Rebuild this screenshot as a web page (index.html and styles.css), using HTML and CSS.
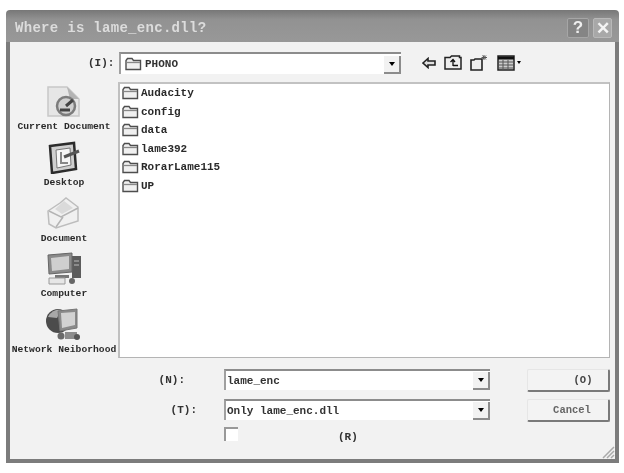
FILE: index.html
```html
<!DOCTYPE html>
<html lang="en">
<head>
<meta charset="utf-8">
<title>Where is lame_enc.dll?</title>
<link rel="stylesheet" href="styles.css">
</head>
<body>
<svg class="defs" width="0" height="0" aria-hidden="true">
  <symbol id="folder" viewBox="0 0 17 14">
    <path d="M1 12.5V3.5L2.5 1.5H7L8.5 3.5H15.5V12.5Z" fill="#f0f0f0" stroke="#4e4e4e" stroke-width="1.4"/>
    <path d="M1.5 5.5H15" stroke="#888" stroke-width="1.3"/>
  </symbol>
</svg>
<main class="win">
  <header class="title">
    <h1 class="title-text">Where is lame_enc.dll?</h1>
    <div class="caption">
      <span class="cap-btn cap-help">?</span>
      <span class="cap-btn cap-close">✕</span>
    </div>
  </header>
  <section class="client">
    <div class="toolbar">
      <span class="lbl lbl-look">(I):</span>
      <div class="combo combo-look">
        <svg class="ico-folder"><use href="#folder"/></svg>
        <span class="combo-text">PHONO</span>
        <span class="drop"><i class="tri"></i></span>
      </div>
      <div class="tools">
        <svg width="14" height="12" viewBox="0 0 14 12"><path d="M1 6L6 1.5V4H13V8H6V10.5Z" fill="#e0e0e0" stroke="#222" stroke-width="1.6"/></svg>
        <svg width="18" height="15" viewBox="0 0 18 15"><path d="M1 14V2.5H6L7.5 1H15.5V2.5H17V14Z" fill="#eee" stroke="#222" stroke-width="1.5"/><path d="M9 11V5M6.5 7L9 4.5L11 7M9 10.5H14" stroke="#111" stroke-width="1.3" fill="none"/></svg>
        <svg width="19" height="17" viewBox="0 0 19 17"><path d="M1 16V6H4L5 5H12V16Z" fill="#eee" stroke="#222" stroke-width="1.6"/><path d="M14 1V6M11.5 3.5H17M12.5 1.5L16 5.5M16 1.5L12.5 5.5" stroke="#555" stroke-width="1"/></svg>
        <span class="view">
          <svg width="18" height="16" viewBox="0 0 18 16"><rect x="1" y="1" width="16" height="14" fill="#ccc" stroke="#222" stroke-width="1.5"/><path d="M1 3H17" stroke="#111" stroke-width="3"/><path d="M2 7H16M2 10H16M2 13H16M6 5V15M11 5V15" stroke="#555" stroke-width="1"/></svg>
          <i class="tri tri-small"></i>
        </span>
      </div>
    </div>
    <div class="main">
      <nav class="places">
        <a class="place">
          <svg width="36" height="33" viewBox="0 0 36 33"><path d="M2 2H21L33 14V31H2Z" fill="#e6e6e6" stroke="#c8c8c8" stroke-width="1.5"/><path d="M21 2L24 14H33" fill="#b4b4b4"/><circle cx="20" cy="21" r="9" fill="#d0d0d0" stroke="#7c7c7c" stroke-width="2.5"/><path d="M20 21L27 15M14 25L24 25" stroke="#444" stroke-width="3"/></svg>
          <span>Current Document</span>
        </a>
        <a class="place">
          <svg width="36" height="33" viewBox="0 0 36 33"><path d="M4 5L28 2L30 28L6 32Z" fill="#cfcfcf" stroke="#2c2c2c" stroke-width="2.5"/><path d="M10 9L24 7L25 24L11 27Z" fill="#f6f6f6" stroke="#777"/><path d="M15 11V22H22" fill="none" stroke="#888" stroke-width="2"/><path d="M18 16L33 10" stroke="#555" stroke-width="3"/></svg>
          <span>Desktop</span>
        </a>
        <a class="place">
          <svg width="36" height="33" viewBox="0 0 36 33"><path d="M2 14L14 6L20 1L32 10L32 24L10 31L3 27Z" fill="#f0f0f0" stroke="#bdbdbd" stroke-width="1.5"/><path d="M3 14L15 20L32 11M10 30L17 20" fill="none" stroke="#b4b4b4" stroke-width="1.5"/><path d="M18 4L27 11L16 17L9 12Z" fill="#dadada"/></svg>
          <span>Document</span>
        </a>
        <a class="place">
          <svg width="38" height="33" viewBox="0 0 38 33"><rect x="27" y="4" width="9" height="22" fill="#5c5c5c"/><path d="M29 9H34M29 13H34" stroke="#bbb"/><path d="M3 3L27 1V20L4 22Z" fill="#8a8a8a" stroke="#666"/><path d="M6 6L24 4V17L7 19Z" fill="#cfcfcf"/><path d="M10 23H24V26H10Z" fill="#777"/><path d="M4 26H20V32H4Z" fill="#e6e6e6" stroke="#9a9a9a"/><circle cx="27" cy="29" r="3" fill="#666"/></svg>
          <span>Computer</span>
        </a>
        <a class="place">
          <svg width="38" height="33" viewBox="0 0 38 33"><circle cx="13" cy="13" r="12" fill="#4c4c4c"/><path d="M3 9A12 12 0 0 1 16 2L12 10Z" fill="#a8a8a8"/><path d="M13 3L32 1V20L15 23Z" fill="#8a8a8a" stroke="#777"/><path d="M16 5L30 4V17L17 20Z" fill="#d2d2d2"/><path d="M20 24H32V31H20Z" fill="#8c8c8c"/><circle cx="16" cy="28" r="3.5" fill="#6a6a6a"/><circle cx="32" cy="29" r="3" fill="#555"/></svg>
          <span>Network Neiborhood</span>
        </a>
      </nav>
      <ul class="files">
        <li class="file"><svg class="ico-folder"><use href="#folder"/></svg>Audacity</li>
        <li class="file"><svg class="ico-folder"><use href="#folder"/></svg>config</li>
        <li class="file"><svg class="ico-folder"><use href="#folder"/></svg>data</li>
        <li class="file"><svg class="ico-folder"><use href="#folder"/></svg>lame392</li>
        <li class="file"><svg class="ico-folder"><use href="#folder"/></svg>RorarLame115</li>
        <li class="file"><svg class="ico-folder"><use href="#folder"/></svg>UP</li>
      </ul>
    </div>
    <div class="bottom">
      <div class="form">
        <div class="row row-name">
          <span class="lbl lbl-name">(N):</span>
          <div class="combo combo-field"><span class="combo-text">lame_enc</span><span class="drop"><i class="tri"></i></span></div>
        </div>
        <div class="row row-type">
          <span class="lbl lbl-type">(T):</span>
          <div class="combo combo-field"><span class="combo-text">Only lame_enc.dll</span><span class="drop"><i class="tri"></i></span></div>
        </div>
        <div class="row-check">
          <span class="check"></span>
          <span class="lbl lbl-ro">(R)</span>
        </div>
      </div>
      <div class="buttons">
        <button class="btn btn-ok" type="button">(O)</button>
        <button class="btn btn-cancel" type="button">Cancel</button>
      </div>
    </div>
    <svg class="grip" width="14" height="14" viewBox="0 0 14 14"><path d="M13 2L2 13M13 6L6 13M13 10L10 13" stroke="#aaa" stroke-width="1.5"/></svg>
  </section>
</main>
</body>
</html>
```
FILE: styles.css
```css
* { box-sizing: border-box; }
html, body { margin: 0; padding: 0; background: #fff; }
body { width: 624px; height: 473px; overflow: hidden; font-family: "Liberation Mono", monospace; color: #222; }
.defs { position: absolute; }
.win {
  width: 613px;
  height: 453px;
  margin: 10px 0 0 6px;
  display: flex;
  flex-direction: column;
  filter: blur(0.7px);
}
.title {
  height: 32px;
  flex: none;
  display: flex;
  align-items: center;
  justify-content: space-between;
  padding: 4px 7px 0 9px;
  border-radius: 4px 4px 0 0;
  background: linear-gradient(#777, #929292 30%, #989898);
}
.title-text {
  margin: 0;
  font: bold 14px "Liberation Mono", monospace;
  letter-spacing: 0.3px;
  color: #dcdcdc;
}
.caption { display: flex; gap: 4px; }
.cap-btn {
  height: 20px;
  display: flex;
  align-items: center;
  justify-content: center;
  border-radius: 2px;
  color: #efefef;
  font: bold 17px "Liberation Sans", sans-serif;
}
.cap-help { width: 22px; background: #858585; border: 1px solid #a6a6a6; }
.cap-close { width: 19px; background: #a8a8a8; border: 1px solid #b8b8b8; color: #f4f4f4; }
.client {
  position: relative;
  flex: 1;
  display: flex;
  flex-direction: column;
  background: #f2f2f2;
  border: solid #7c7c7c;
  border-width: 0 4px 4px;
}
.toolbar { height: 40px; flex: none; display: flex; align-items: center; padding: 1px 0 0 78px; }
.lbl { font-size: 11px; font-weight: bold; color: #333; }
.lbl-look { width: 31px; }
.combo {
  display: flex;
  align-items: center;
  background: #fff;
  border-top: 2px solid #8c8c8c;
  border-left: 2px solid #a0a0a0;
  font-size: 11px;
}
.combo-look { width: 282px; height: 22px; padding-left: 4px; gap: 3px; }
.combo-field { width: 266px; height: 21px; padding-left: 1px; }
.combo-text { flex: 1; font-size: 11px; font-weight: bold; color: #333; }
.drop {
  width: 17px;
  align-self: flex-end;
  height: 18px;
  display: flex;
  align-items: center;
  justify-content: center;
  background: #f2f2f2;
  border-right: 2px solid #8c8c8c;
  border-bottom: 2px solid #8c8c8c;
}
.tri { width: 0; height: 0; border: 3.5px solid transparent; border-top: 4px solid #000; border-bottom: 0; }
.tri-small { border-width: 2px; border-top-width: 3px; border-bottom-width: 0; }
.ico-folder { width: 17px; height: 14px; flex: none; }
.tools { display: flex; align-items: center; gap: 8px; margin-left: 21px; }
.view { display: flex; align-items: center; gap: 2px; }
.main { height: 276px; flex: none; display: flex; }
.places { width: 108px; flex: none; display: flex; flex-direction: column; align-items: center; padding-top: 3px; }
.place {
  height: 55.75px;
  flex: none;
  display: flex;
  flex-direction: column;
  align-items: center;
  font-size: 9.7px;
  font-weight: bold;
  color: #2a2a2a;
  white-space: nowrap;
}
.place svg { flex: none; margin-bottom: 3px; }
.files {
  width: 492px;
  margin: 0;
  padding: 0 0 0 2px;
  list-style: none;
  background: #fff;
  border: 1px solid #b4b4b4;
  border-top: 2px solid #c2c2c2;
  border-left: 2px solid #c0c0c0;
}
.file { height: 18.5px; display: flex; align-items: center; gap: 2px; font-size: 11px; font-weight: bold; color: #2a2a2a; }
.bottom { flex: 1; display: flex; padding-top: 11px; position: relative; }
.form { width: 480px; flex: none; display: flex; flex-direction: column; }
.row { display: flex; align-items: center; justify-content: flex-end; }
.row-name { height: 21px; margin-bottom: 9px; }
.row-type { height: 21px; }
.lbl-name { margin-right: 39px; }
.lbl-type { margin-right: 27px; }
.row-check { display: flex; align-items: flex-start; margin: 7px 0 0 214px; }
.check {
  width: 14px;
  height: 14px;
  background: #fff;
  border-top: 2px solid #999;
  border-left: 2px solid #999;
}
.lbl-ro { margin: 4px 0 0 100px; }
.buttons { display: flex; flex-direction: column; gap: 7px; margin-left: 37px; }
.btn {
  width: 83px;
  height: 23px;
  padding: 0;
  font: bold 10.5px "Liberation Mono", monospace;
  color: #666;
  background: #f3f3f3;
  border: solid #7a7a7a;
  border-width: 0 2px 2px 0;
  border-top: 1px solid #e6e6e6;
  border-left: 1px solid #e6e6e6;
  border-radius: 2px;
}
.btn-ok { padding-left: 30px; color: #444; }
.btn-cancel { padding-left: 8px; }
.grip { position: absolute; right: 0; bottom: 0; }
```
